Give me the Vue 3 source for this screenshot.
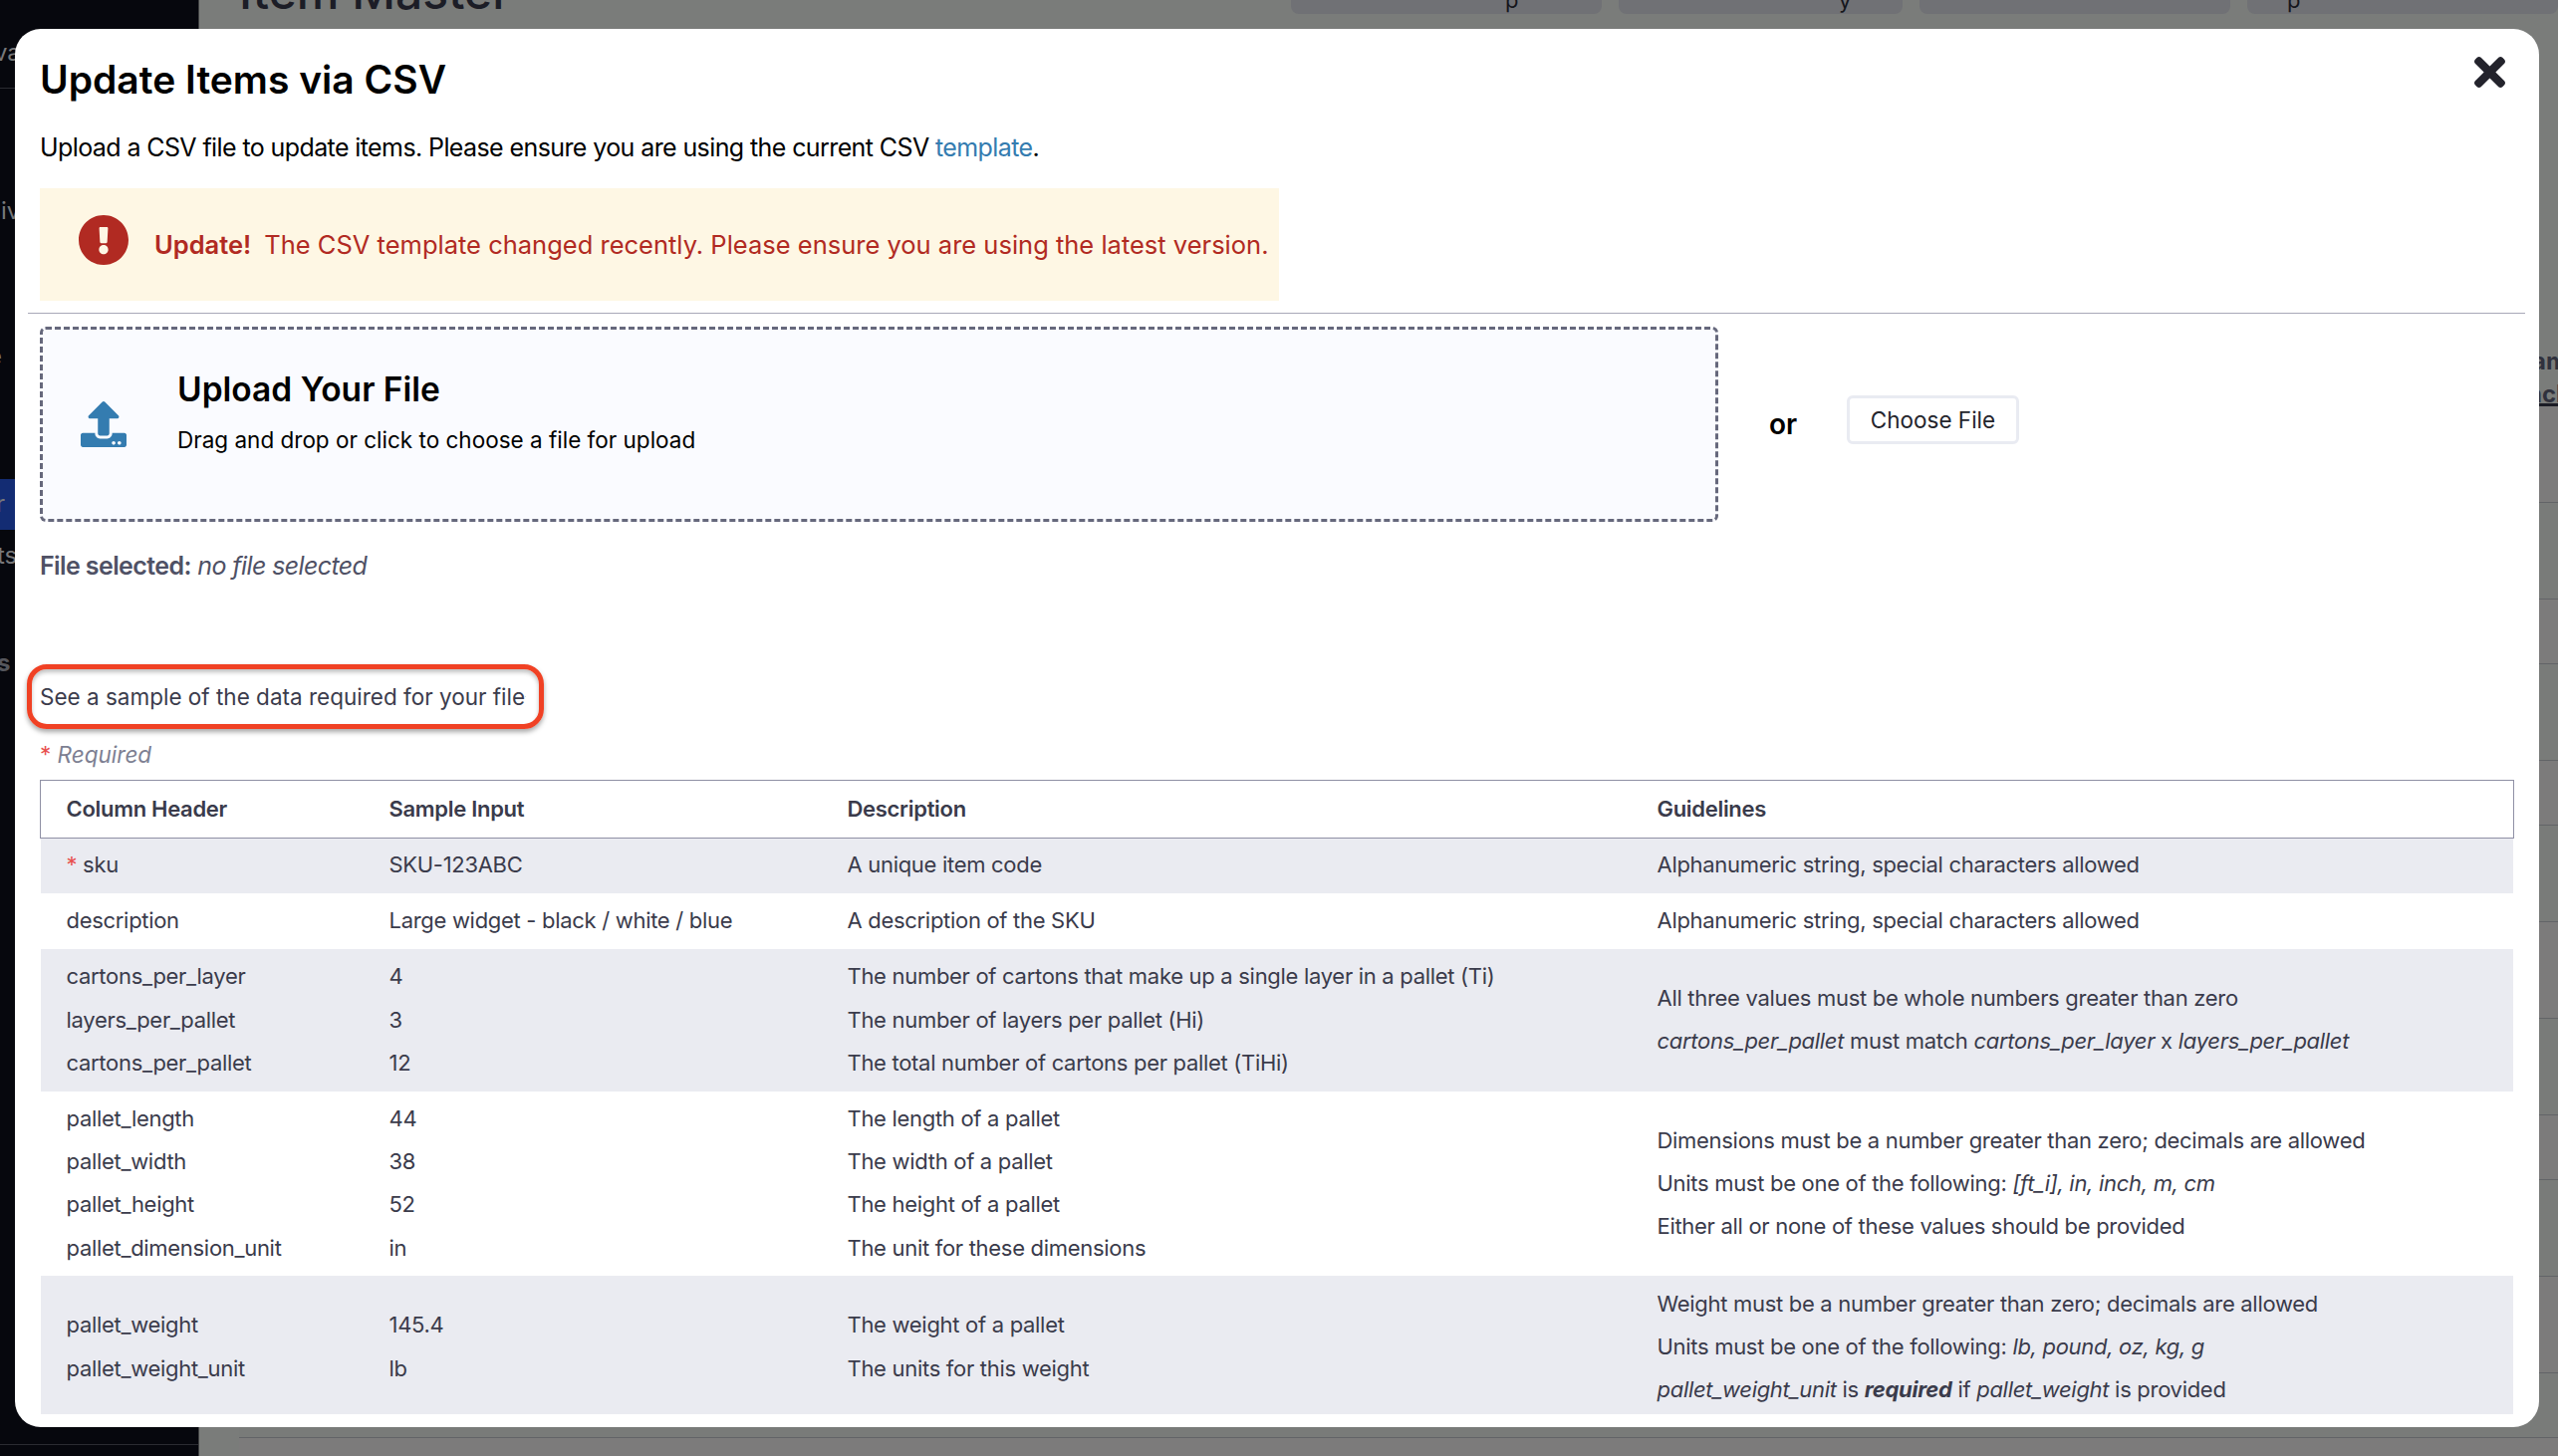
<template>
    <div class="page">
        <!-- page behind the dialog -->
        <aside class="sidebar">
            <div v-for="item in navItems" :key="item.name" class="nav-item" :class="item.name">{{ item.label }}</div>
        </aside>
        <main class="content">
            <header class="content-header">
                <h1>Item Master</h1>
                <div class="actions">
                    <div v-for="(a, i) in actions" :key="i" class="action" :class="'action-' + i">{{ a }}</div>
                </div>
            </header>
            <div class="items-table">
                <div class="items-head">
                    <div class="head-line">am</div>
                    <div class="head-line nch">nch</div>
                </div>
                <div v-for="(h, i) in itemRows" :key="i" class="items-row" :style="{ height: h + 'px' }"></div>
            </div>
        </main>

        <div class="modal">
            <button class="close" aria-label="Close">
                <svg viewBox="0 80 352 352"><path d="M242.72 256l100.07-100.07c12.28-12.28 12.28-32.19 0-44.48l-22.24-22.24c-12.28-12.28-32.19-12.28-44.48 0L176 189.28 75.93 89.21c-12.28-12.28-32.19-12.28-44.48 0L9.21 111.45c-12.28 12.28-12.28 32.19 0 44.48L109.28 256 9.21 356.07c-12.28 12.28-12.28 32.19 0 44.48l22.24 22.24c12.28 12.28 32.2 12.28 44.48 0L176 322.72l100.07 100.07c12.28 12.28 32.2 12.28 44.48 0l22.24-22.24c12.28-12.28 12.28-32.19 0-44.48L242.72 256z" /></svg>
            </button>
            <div class="modal-body">
                <h2><span>Update Items via CSV</span></h2>
                <p class="intro"><span>Upload a CSV file to update items. Please ensure you are using the current CSV <a>template</a>.</span></p>
                <div class="warning">
                    <svg class="warning-icon" viewBox="8 8 496 496"><path d="M504 256c0 136.997-111.043 248-248 248S8 392.997 8 256C8 119.083 119.043 8 256 8s248 111.083 248 248zm-248 50c-25.405 0-46 20.595-46 46s20.595 46 46 46 46-20.595 46-46-20.595-46-46-46zm-43.673-165.346l7.418 136c.347 6.364 5.609 11.346 11.982 11.346h48.546c6.373 0 11.635-4.982 11.982-11.346l7.418-136c.375-6.874-5.098-12.654-11.982-12.654h-63.383c-6.884 0-12.356 5.78-11.981 12.654z" /></svg>
                    <strong>Update!</strong>
                    <span class="warning-text">The CSV template changed recently. Please ensure you are using the latest version.</span>
                </div>
                <hr />
                <div class="upload">
                    <div class="dropzone">
                        <svg class="upload-icon" viewBox="0 0 512 512"><path d="M296 384h-80c-13.3 0-24-10.7-24-24V192h-87.7c-17.8 0-26.7-21.5-14.1-34.1L242.3 5.7c7.5-7.5 19.8-7.5 27.3 0l152.2 152.2c12.6 12.6 3.7 34.1-14.1 34.1H320v168c0 13.3-10.7 24-24 24zm216-8v112c0 13.3-10.7 24-24 24H24c-13.3 0-24-10.7-24-24V376c0-13.3 10.7-24 24-24h136v8c0 30.9 25.1 56 56 56h80c30.9 0 56-25.1 56-56v-8h136c13.3 0 24 10.7 24 24zm-124 88c0-11-9-20-20-20s-20 9-20 20 9 20 20 20 20-9 20-20zm64 0c0-11-9-20-20-20s-20 9-20 20 9 20 20 20 20-9 20-20z" /></svg>
                        <div>
                            <h3><span>Upload Your File</span></h3>
                            <p class="hint"><span>Drag and drop or click to choose a file for upload</span></p>
                        </div>
                    </div>
                    <span class="or">or</span>
                    <button class="choose">Choose File</button>
                </div>
                <p class="selected"><b>File selected:</b> <i>no file selected</i></p>
                <div class="sample-toggle">
                    <span>See a sample of the data required for your file</span>
                    <svg viewBox="0 0 14 9"><path d="M1.9 7.1L7 2l5.1 5.1" /></svg>
                </div>
                <p class="required"><span class="star">*</span> <i>Required</i></p>
                <table>
                    <thead>
                        <tr>
                            <th v-for="c in columns" :key="c"><span>{{ c }}</span></th>
                        </tr>
                    </thead>
                    <tbody>
                        <tr v-for="(row, i) in rows" :key="i">
                            <td>
                                <div v-for="f in row.fields" :key="f"><span v-if="row.required" class="star">*&nbsp;</span>{{ f }}</div>
                            </td>
                            <td>
                                <div v-for="s in row.samples" :key="s">{{ s }}</div>
                            </td>
                            <td>
                                <div v-for="d in row.descriptions" :key="d">{{ d }}</div>
                            </td>
                            <td>
                                <div v-for="g in row.guidelines" :key="g" v-html="g"></div>
                            </td>
                        </tr>
                    </tbody>
                </table>
            </div>
        </div>
    </div>
</template>

<script setup>
const navItems = [
    { name: 'nav-wa', label: 'va' },
    { name: 'nav-iv', label: 'iv' },
    { name: 'nav-e', label: 'e' },
    { name: 'nav-active', label: 'r' },
    { name: 'nav-ts', label: 'ts' },
    { name: 'nav-group', label: 's' },
    { name: 'nav-footer', label: '' },
]

const actions = ['p', 'y', '', 'p']

const itemRows = [97, 97, 65, 97, 65, 97, 97, 97, 65, 97, 97, 65, 97]

const columns = ['Column Header', 'Sample Input', 'Description', 'Guidelines']

const rows = [
    {
        required: true,
        fields: ['sku'],
        samples: ['SKU-123ABC'],
        descriptions: ['A unique item code'],
        guidelines: ['Alphanumeric string, special characters allowed'],
    },
    {
        fields: ['description'],
        samples: ['Large widget - black / white / blue'],
        descriptions: ['A description of the SKU'],
        guidelines: ['Alphanumeric string, special characters allowed'],
    },
    {
        fields: ['cartons_per_layer', 'layers_per_pallet', 'cartons_per_pallet'],
        samples: ['4', '3', '12'],
        descriptions: [
            'The number of cartons that make up a single layer in a pallet (Ti)',
            'The number of layers per pallet (Hi)',
            'The total number of cartons per pallet (TiHi)',
        ],
        guidelines: [
            'All three values must be whole numbers greater than zero',
            '<em>cartons_per_pallet</em> must match <em>cartons_per_layer</em> x <em>layers_per_pallet</em>',
        ],
    },
    {
        fields: ['pallet_length', 'pallet_width', 'pallet_height', 'pallet_dimension_unit'],
        samples: ['44', '38', '52', 'in'],
        descriptions: [
            'The length of a pallet',
            'The width of a pallet',
            'The height of a pallet',
            'The unit for these dimensions',
        ],
        guidelines: [
            'Dimensions must be a number greater than zero; decimals are allowed',
            'Units must be one of the following: <em>[ft_i], in, inch, m, cm</em>',
            'Either all or none of these values should be provided',
        ],
    },
    {
        fields: ['pallet_weight', 'pallet_weight_unit'],
        samples: ['145.4', 'lb'],
        descriptions: ['The weight of a pallet', 'The units for this weight'],
        guidelines: [
            'Weight must be a number greater than zero; decimals are allowed',
            'Units must be one of the following: <em>lb, pound, oz, kg, g</em>',
            '<em>pallet_weight_unit</em> is <em><strong>required</strong></em> if <em>pallet_weight</em> is provided',
        ],
    },
]
</script>

<style>
body {
    margin: 0;
    overflow: hidden;
}
</style>

<style scoped>
* {
    box-sizing: border-box;
}

.page {
    position: relative;
    display: flex;
    width: 2568px;
    height: 1462px;
    overflow: hidden;
    font-family: Inter, "Liberation Sans", sans-serif;
    background: #7a7c7a;
}

h1, h2, h3, p {
    margin: 0;
}

.sidebar {
    width: 200px;
    flex: none;
    padding-top: 28px;
    background: #06070d;
    border-right: 1px solid #3f4041;
    overflow: hidden;
}

.nav-item {
    height: 50px;
    line-height: 50px;
    font-size: 24px;
    color: #77787a;
}

.nav-wa {
    height: 61px;
    text-indent: -6px;
    border-bottom: 1px solid #2a2b31;
}

.nav-iv {
    margin-top: 98px;
    text-indent: 1px;
}

.nav-e {
    margin-top: 96px;
    text-indent: -12px;
}

.nav-active {
    height: 51px;
    margin-top: 98px;
    text-indent: -4px;
    background: #132c73;
}

.nav-ts {
    margin-top: 1px;
    text-indent: -3px;
}

.nav-group {
    margin-top: 58px;
    text-indent: -3px;
    font-weight: 700;
    color: #55565c;
}

.nav-footer {
    margin-top: 759px;
    border-top: 1px solid #2a2b31;
}

.content {
    flex: 1;
    min-width: 0;
    padding-left: 40px;
    overflow: hidden;
}

.content-header {
    display: flex;
    height: 14px;
}

.content-header h1 {
    width: 1147px;
    height: 14px;
    line-height: 0;
    padding-top: 0;
    font-size: 48px;
    font-weight: 500;
    letter-spacing: 0;
    color: #1c1d26;
    margin-top: -8px;
}

.actions {
    display: flex;
    gap: 17px;
}

.action {
    flex: none;
    height: 14px;
    width: 312px;
    line-height: 0;
    padding-top: -8px;
    font-size: 22px;
    color: #15161c;
    background: #707175;
    border-radius: 0 0 8px 8px;
    text-indent: 215px;
    overflow: hidden;
}

.action-1 {
    width: 285px;
    text-indent: 221px;
}

.action-3 {
    text-indent: 40px;
}

.items-head {
    height: 394px;
    padding-top: 332px;
    border-bottom: 3px solid #1b1c25;
    font-size: 24px;
    font-weight: 700;
    color: #30313d;
}

.head-line {
    height: 33px;
    line-height: 33px;
    padding-left: 2302px;
    white-space: nowrap;
}

.nch {
    padding-left: 2297px;
}

.items-row {
    border-bottom: 1px solid #626467;
    background: #7c7b7b;
}

.items-row:nth-child(odd) {
    background: #797b79;
}

.modal {
    position: absolute;
    top: 29px;
    left: 15px;
    width: 2534px;
    height: 1404px;
    padding-bottom: 13px;
    background: #fff;
    border-radius: 26px;
    color: #000;
}

.modal-body {
    height: 100%;
    padding: 21px 25px 0;
    overflow: hidden;
}

.close {
    position: absolute;
    top: 28px;
    right: 34px;
    width: 31px;
    height: 31px;
    padding: 0;
    border: 0;
    background: none;
}

.close svg {
    display: block;
    width: 31px;
    height: 31px;
    fill: #23232c;
}

h2 {
    height: 60px;
    line-height: 60px;
    font-size: 39px;
    font-weight: 600;
}

.intro {
    height: 34px;
    line-height: 34px;
    margin-top: 21px;
    font-size: 25px;
    letter-spacing: -0.6px;
}

.intro a {
    color: #347cb0;
}

.warning {
    display: flex;
    align-items: center;
    width: 1244px;
    height: 113px;
    margin-top: 24px;
    padding-left: 39px;
    font-size: 25.5px;
    white-space: nowrap;
    color: #b12a22;
    background: #fef7e4;
}

.warning-icon {
    width: 50px;
    height: 50px;
    margin: 0 26px 9px 0;
    fill: #b12a22;
}

.warning strong {
    font-weight: 600;
}

.warning-text {
    margin-left: 13px;
}

hr {
    height: 1px;
    margin: 12px -11px 13px -12px;
    border: 0;
    background: #a9a9b8;
}

.upload {
    display: flex;
}

.dropzone {
    display: flex;
    width: 1685px;
    height: 196px;
    padding-left: 38px;
    border: 3px dashed #66687c;
    border-radius: 6px;
    background: #fafbff;
}

.upload-icon {
    width: 46px;
    height: 46px;
    margin: 72px 51px 0 0;
    fill: #347cb0;
}

h3 {
    height: 50px;
    line-height: 50px;
    margin-top: 35px;
    font-size: 33.5px;
    font-weight: 600;
}

.hint {
    height: 40px;
    line-height: 40px;
    margin-top: 6px;
    font-size: 22.5px;
}

.or {
    height: 40px;
    line-height: 40px;
    margin: 78px 0 0 51px;
    width: 78px;
    font-size: 28px;
    font-weight: 600;
}

.choose {
    width: 173px;
    height: 49px;
    margin-top: 69px;
    padding: 0;
    border: 3px solid #e9ebf2;
    border-radius: 6px;
    font-family: inherit;
    font-size: 22.5px;
    color: #24252c;
    background: #fff;
}

.selected {
    height: 40px;
    line-height: 40px;
    margin-top: 24px;
    font-size: 25px;
    letter-spacing: -0.6px;
    color: #4f5165;
}

.selected b {
    font-weight: 600;
}

.sample-toggle {
    display: flex;
    align-items: center;
    width: 519px;
    height: 65px;
    margin: 79px 0 8px -13px;
    padding-left: 8px;
    border: 5px solid #f04124;
    border-radius: 20px;
    box-shadow: 0 3px 5px rgba(0, 0, 0, 0.35), inset 0 3px 4px rgba(0, 0, 0, 0.25);
    font-size: 22.5px;
    color: #3b3c4c;
    white-space: nowrap;
}

.sample-toggle svg {
    width: 14px;
    height: 9px;
    margin-left: auto;
    margin-right: 13px;
    fill: none;
    stroke: #2c2d3a;
    stroke-width: 3;
    stroke-linecap: round;
    stroke-linejoin: round;
}

.required {
    height: 35px;
    line-height: 35px;
    font-size: 22.5px;
    color: #7d7f92;
}

.star {
    color: #e8504e;
}

table {
    display: block;
    margin: 9px 1px 0;
    border-collapse: collapse;
    font-size: 22px;
    letter-spacing: -0.3px;
    color: #3a3b4b;
}

thead,
tbody {
    display: block;
}

tr {
    display: grid;
    grid-template-columns: 324px 460px 813px 1fr;
    align-items: center;
    padding: 6.5px 0 6.5px 25.5px;
}

thead tr {
    height: 56.5px;
    outline: 1px solid #8f90a5;
}

tbody tr:nth-child(odd) {
    background: #eaebf1;
}

th,
td {
    display: block;
    padding: 0;
    text-align: left;
    line-height: 43.2px;
    white-space: nowrap;
}

th {
    font-weight: 600;
}
</style>
